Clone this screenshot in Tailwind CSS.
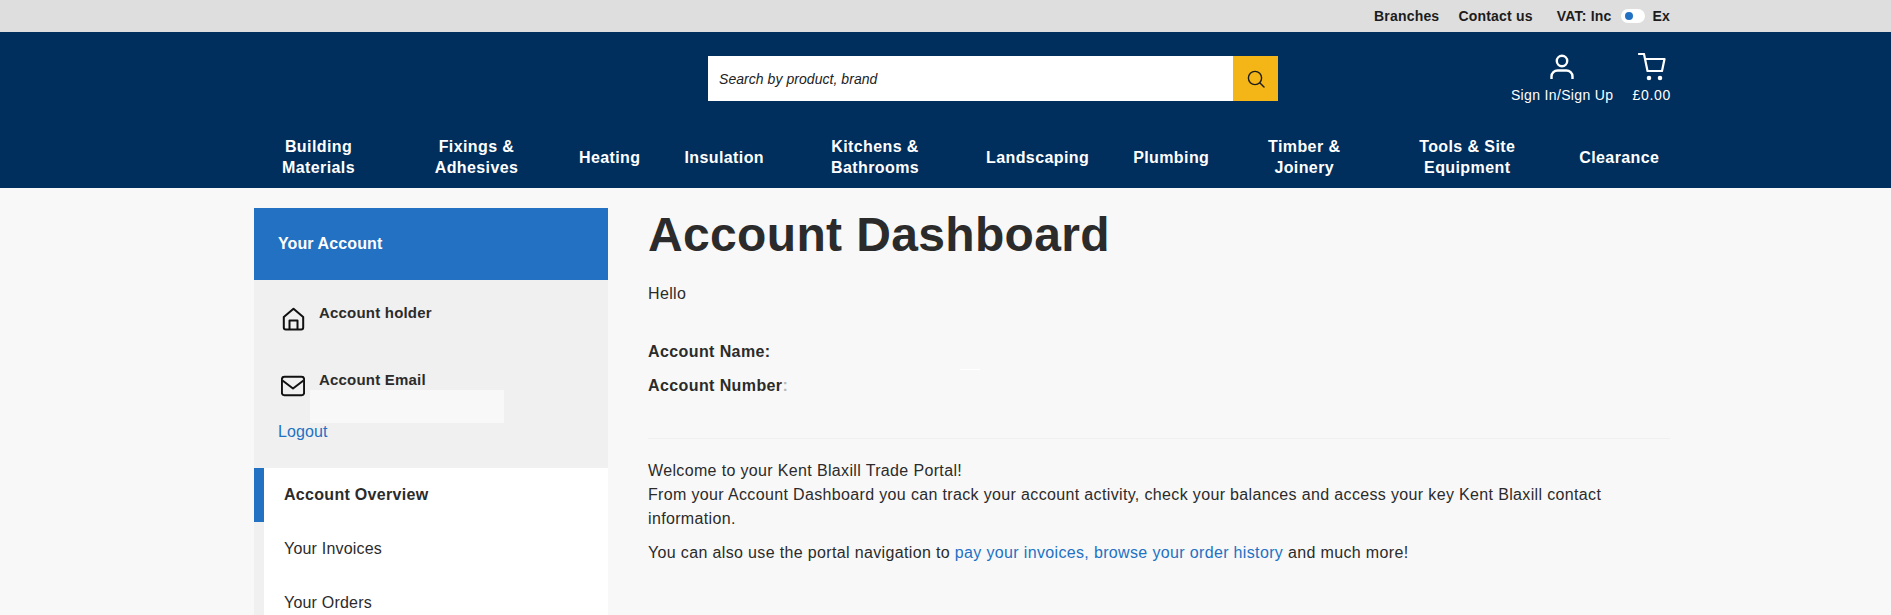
<!DOCTYPE html>
<html lang="en">
<head>
<meta charset="utf-8">
<script src="https://cdn.jsdelivr.net/npm/@tailwindcss/browser@4"></script>
<title>Account Dashboard</title>
</head>
<body class="m-0 h-[615px] overflow-hidden bg-[#f8f8f8] font-['Liberation_Sans',Arial,sans-serif] text-[16px] tracking-[0.35px] text-[#2b2b2b]">
<div class="flex h-8 items-center justify-end bg-[#dedede] pr-[221px] text-[14px] font-bold tracking-[0.2px] text-[#1c1c1c]">
  <a class="mr-[19px]">Branches</a>
  <a class="mr-[24px]">Contact us</a>
  <span>VAT: Inc</span>
  <span class="ml-[10px] mr-[7px] flex h-[14px] w-6 items-center rounded-full bg-white pl-[4px]"><span class="h-2 w-2 rounded-full bg-[#2271c3]"></span></span>
  <span>Ex</span>
</div>
<header class="h-[156px] bg-[#002e5d] text-white">
  <div class="relative h-[88px]">
    <div class="absolute left-[708px] top-6 flex h-[45px] w-[570px] bg-white">
      <div class="flex flex-1 items-center pl-[11px] pt-[2px] text-[14px] italic tracking-[0.05px] text-[#222222]">Search by product, brand</div>
      <div class="flex w-[45px] items-center justify-center bg-[#f4b616]">
        <svg class="h-[18px] w-[18px]" viewBox="0 0 18 18" fill="none" stroke="#1c1c1c" stroke-width="1.4" stroke-linecap="round"><circle cx="8" cy="8" r="6.6"/><path d="M13 13l4 4"/></svg>
      </div>
    </div>
    <div class="absolute right-[220px] top-[21px] flex items-start gap-[19px] text-[14px] tracking-[0.35px]">
      <div class="flex flex-col items-center">
        <svg class="h-7 w-7" viewBox="0 0 28 28" fill="none" stroke="#fff" stroke-width="2.4"><circle cx="14" cy="8" r="5.2"/><path d="M3.500 26v-2.500c0-3.500 3-6 6-6h9c3 0 6 2.500 6 6V26"/></svg>
        <span class="mt-[6px] leading-[16px]">Sign In/Sign Up</span>
      </div>
      <div class="flex flex-col items-center">
        <svg class="h-7 w-7" viewBox="0 0 28 28" fill="none" stroke="#fff" stroke-width="2.200" stroke-linecap="round" stroke-linejoin="round"><path d="M1 1h5l3.500 17h14.500l2.500-12H7"/><circle cx="11" cy="25" r="1.200" fill="#fff"/><circle cx="22" cy="25" r="1.200" fill="#fff"/></svg>
        <span class="mt-[6px] leading-[16px] tracking-[0.7px]">£0.00</span>
      </div>
    </div>
  </div>
  <nav class="flex h-[68px] items-center gap-[44px] pl-[263px] pt-[5px] text-center text-[16px] font-bold leading-[21px] tracking-[0.4px]">
    <a class="w-[111px]">Building Materials</a>
    <a class="w-[117px]">Fixings &amp; Adhesives</a>
    <a class="pt-[1px]">Heating</a>
    <a class="pt-[1px]">Insulation</a>
    <a class="w-[134px]">Kitchens &amp; Bathrooms</a>
    <a class="pt-[1px]">Landscaping</a>
    <a class="pt-[1px]">Plumbing</a>
    <a class="w-[102px]">Timber &amp; Joinery</a>
    <a class="w-[136px]">Tools &amp; Site Equipment</a>
    <a class="pt-[1px]">Clearance</a>
  </nav>
</header>
<main class="flex gap-10 pl-[254px] pt-5">
  <aside class="relative w-[354px] shrink-0">
    <div class="flex h-[72px] items-center bg-[#2271c3] pl-6 font-bold tracking-[0.1px] text-white">Your Account</div>
    <div class="relative h-[188px] bg-[#f0f0f0]">
      <div class="absolute left-[27px] top-[24px] flex items-start">
        <svg class="mt-[3px] h-6 w-6" viewBox="0 0 24 24" fill="none" stroke="#111" stroke-width="2" stroke-linejoin="round"><path d="M2.800 10 12.500 1.800 22.200 10V20.500a2 2 0 0 1-2 2H4.800a2 2 0 0 1-2-2z"/><path d="M8.500 22.500V13.500h8v9"/></svg>
        <span class="ml-[14px] text-[15px] font-bold leading-[18px] tracking-[0.2px]">Account holder</span>
      </div>
      <div class="absolute left-[27px] top-[91px] flex items-start">
        <svg class="mt-[3px] h-6 w-6" viewBox="0 0 24 24" fill="none" stroke="#111" stroke-width="2" stroke-linejoin="round"><rect x="0.900" y="2.800" width="22.200" height="18.400" rx="2.500"/><path d="M1.500 6.500 12 14.500 22.500 6.500"/></svg>
        <span class="ml-[14px] text-[15px] font-bold leading-[18px] tracking-[0.2px]">Account Email</span>
      </div>
      <div class="absolute left-[56px] top-[110px] h-[33px] w-[194px] bg-[#f8f8f8]"></div>
      <a class="absolute left-6 top-[143px] leading-[18px] tracking-[0.1px] text-[#2271c3]">Logout</a>
    </div>
    <div class="bg-[#f0f0f0] pl-[10px]">
      <ul class="bg-white">
        <li class="relative flex h-[54px] items-center pl-[20px] font-bold tracking-[0.3px]"><span class="absolute -left-[10px] top-0 h-[54px] w-[10px] bg-[#2271c3]"></span>Account Overview</li>
        <li class="flex h-[54px] items-center pl-[20px] tracking-[0.2px]">Your Invoices</li>
        <li class="flex h-[54px] items-center pl-[20px] tracking-[0.2px]">Your Orders</li>
      </ul>
    </div>
  </aside>
  <section class="relative w-[1022px]">
    <h1 class="text-[48px] font-bold leading-[53px] tracking-[0.35px]">Account Dashboard</h1>
    <p class="mt-[21px] leading-[24px]">Hello</p>
    <p class="mt-[34px] font-bold leading-[24px] tracking-[0.4px]">Account Name:</p>
    <p class="mt-[10px] font-bold leading-[24px] tracking-[0.4px]">Account Number<span class="opacity-30">:</span></p>
    <div class="absolute left-[312px] top-[161px] h-[1px] w-5 bg-white"></div>
    <hr class="mt-[40px] border-t border-[#f0f0f0]">
    <p class="mt-[20px] leading-[24px]">Welcome to your Kent Blaxill Trade Portal!<br>From your Account Dashboard you can track your account activity, check your balances and access your key Kent Blaxill contact information.</p>
    <p class="mt-[10px] leading-[24px]">You can also use the portal navigation to <a class="text-[#2271c3]">pay your invoices, browse your order history</a> and much more!</p>
  </section>
</main>
</body>
</html>
